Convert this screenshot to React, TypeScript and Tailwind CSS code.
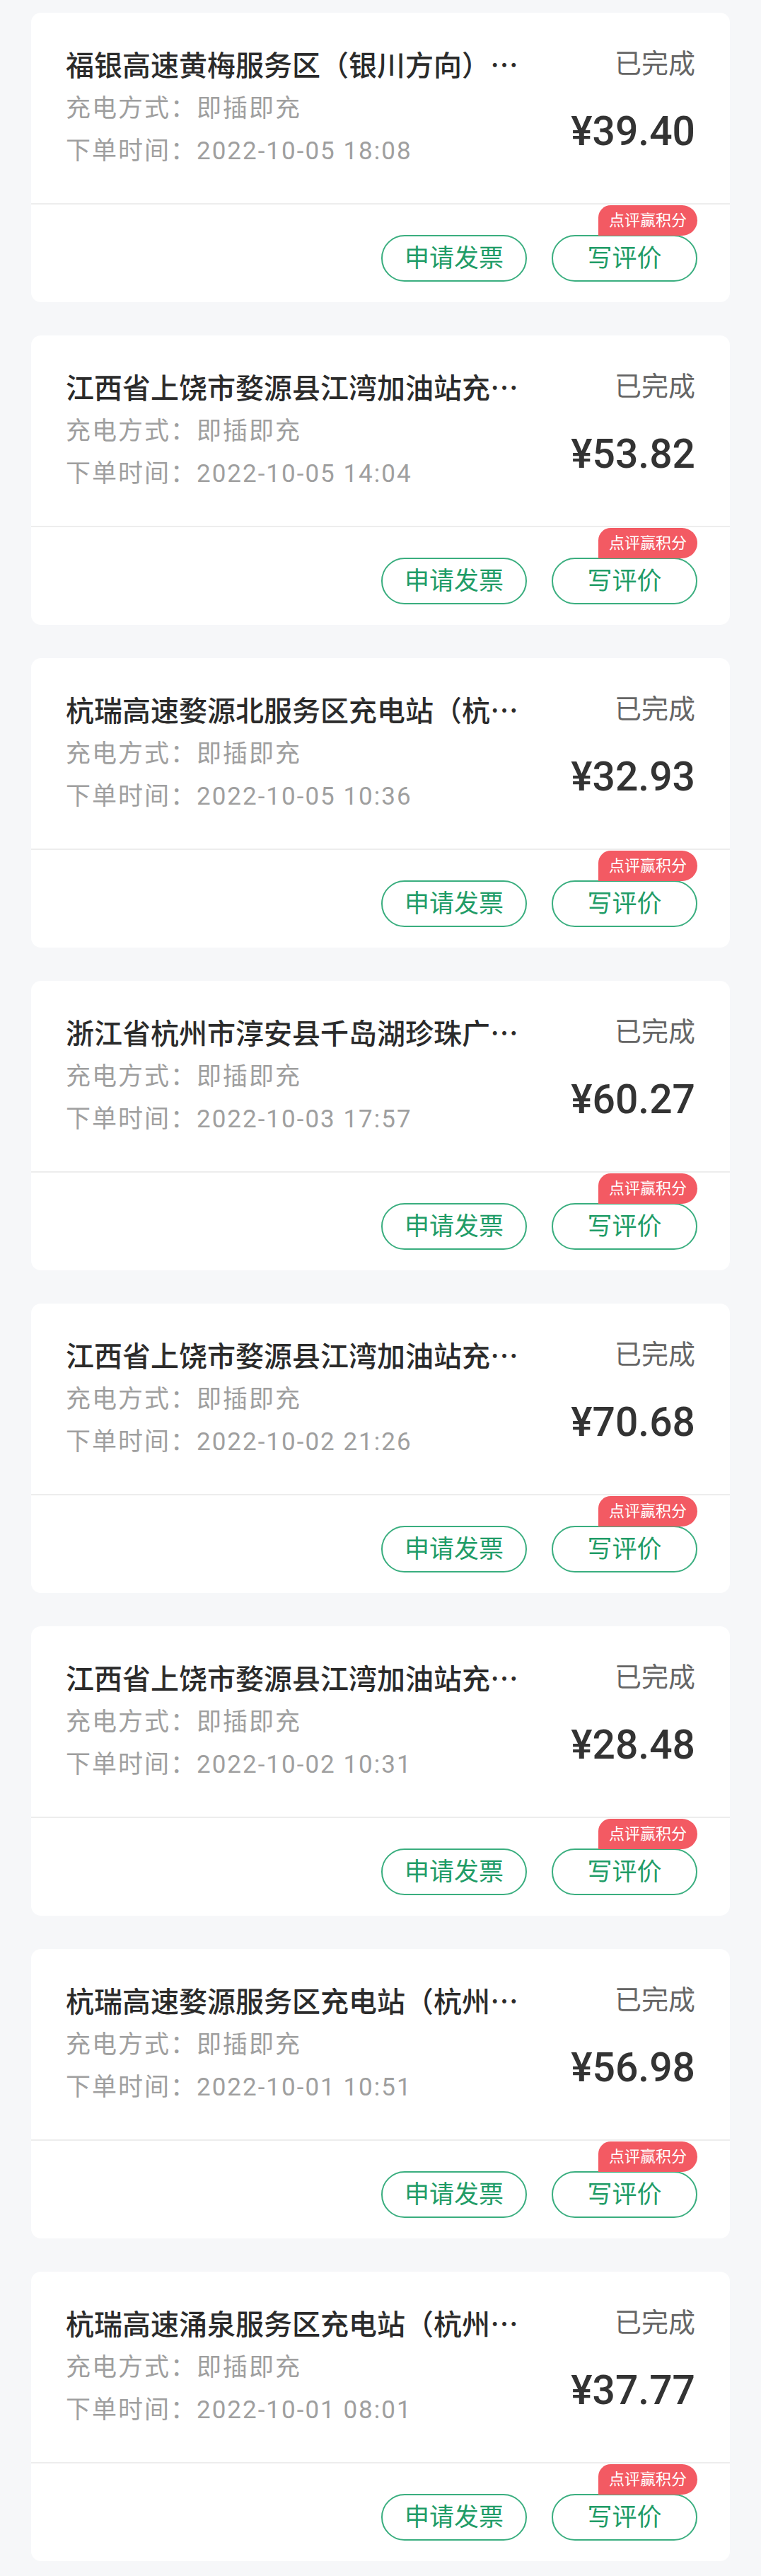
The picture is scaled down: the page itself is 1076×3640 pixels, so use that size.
import React from "react";

type Order = { title: string; time: string; price: string };

const orders: Order[] = [
  { title: "福银高速黄梅服务区（银川方向）…", time: "2022-10-05 18:08", price: "39.40" },
  { title: "江西省上饶市婺源县江湾加油站充…", time: "2022-10-05 14:04", price: "53.82" },
  { title: "杭瑞高速婺源北服务区充电站（杭…", time: "2022-10-05 10:36", price: "32.93" },
  { title: "浙江省杭州市淳安县千岛湖珍珠广…", time: "2022-10-03 17:57", price: "60.27" },
  { title: "江西省上饶市婺源县江湾加油站充…", time: "2022-10-02 21:26", price: "70.68" },
  { title: "江西省上饶市婺源县江湾加油站充…", time: "2022-10-02 10:31", price: "28.48" },
  { title: "杭瑞高速婺源服务区充电站（杭州…", time: "2022-10-01 10:51", price: "56.98" },
  { title: "杭瑞高速涌泉服务区充电站（杭州…", time: "2022-10-01 08:01", price: "37.77" },
];

function OrderCard({ o }: { o: Order }) {
  return (
    <div className="h-[409px] bg-white rounded-[14px] flex flex-col">
      <div className="h-[269px] flex justify-between px-[49px] pt-[48px]">
        <div className="flex flex-col">
          <div className="w-[660px] whitespace-nowrap text-[40px] leading-[48px] font-medium text-[#2b2b2b] font-[family-name:'Noto_Sans_CJK_SC',sans-serif]">
            {o.title}
          </div>
          <div className="mt-[10px] text-[35px] leading-[60px] tracking-[2px] text-[#9f9f9f]">
            充电方式：即插即充
          </div>
          <div className="text-[35px] leading-[60px] tracking-[2px] text-[#9f9f9f]">
            下单时间：{o.time}
          </div>
        </div>
        <div className="flex flex-col items-end">
          <div className="text-[38px] leading-[48px] text-[#666666]">已完成</div>
          <div className="mt-[40px] text-[57px] leading-[64px] font-medium text-[#333333] font-[family-name:Roboto,sans-serif]">
            ¥{o.price}
          </div>
        </div>
      </div>
      <div className="h-[2px] bg-[#ededed]" />
      <div className="flex-1 flex justify-end gap-[35px] pr-[46px] pt-[43px]">
        <button className="w-[206px] h-[66px] rounded-full border-2 border-[#3aae7f] text-[#1f9c67] text-[35px] leading-none flex items-center justify-center bg-white">
          申请发票
        </button>
        <div className="relative h-[66px]">
          <button className="w-[206px] h-[66px] rounded-full border-2 border-[#3aae7f] text-[#1f9c67] text-[35px] leading-none flex items-center justify-center bg-white">
            写评价
          </button>
          <div className="absolute right-0 -top-[42px] h-[43px] px-[15px] bg-[#f35a63] text-white text-[22px] leading-none rounded-tl-[18px] rounded-tr-[22px] rounded-br-[22px] flex items-center whitespace-nowrap">
            点评赢积分
          </div>
        </div>
      </div>
    </div>
  );
}

export default function App() {
  return (
    <div className="min-h-[3640px] w-full bg-[#f6f7f9] px-[44px] pt-[18px] pb-[21px] flex flex-col gap-[47px] font-[family-name:Roboto,'Noto_Sans_CJK_SC',sans-serif]">
      {orders.map((o, i) => (
        <OrderCard key={i} o={o} />
      ))}
    </div>
  );
}
